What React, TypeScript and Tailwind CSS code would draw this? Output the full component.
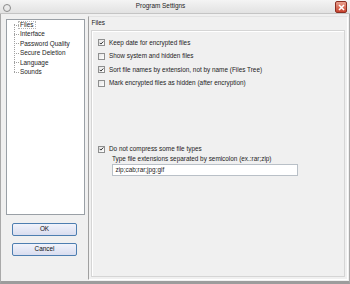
const FONT = { fontFamily: '"Liberation Sans", Arial, sans-serif' };

const TREE_ITEMS = ["Files", "Interface", "Password Quality", "Secure Deletion", "Language", "Sounds"];

const OPTIONS = [
  { label: "Keep date for encrypted files", checked: true },
  { label: "Show system and hidden files", checked: false },
  { label: "Sort file names by extension, not by name (Files Tree)", checked: true },
  { label: "Mark encrypted files as hidden (after encryption)", checked: false },
];

function Check({ checked }: { checked: boolean }) {
  return (
    <span className="flex h-[7px] w-[7px] shrink-0 items-center justify-center border border-[#8e8f8f] bg-gradient-to-br from-[#e4e4e4] to-white">
      {checked && (
        <svg width="6" height="6" viewBox="0 0 6 6">
          <path d="M0.8 2.8 L2.3 4.3 L5.2 1.2" fill="none" stroke="#1f1f1f" strokeWidth="1.1" />
        </svg>
      )}
    </span>
  );
}

function Option({ label, checked }: { label: string; checked: boolean }) {
  return (
    <div className="flex h-[13.5px] items-center gap-[4px]">
      <Check checked={checked} />
      <span className="leading-none">{label}</span>
    </div>
  );
}

function WinButton({ children }: { children: string }) {
  return (
    <button className="flex h-[13px] w-[65px] items-center justify-center rounded-[2px] border border-[#4d7eb0] bg-gradient-to-b from-[#f1f3fb] to-[#d9ddef] leading-none text-[#111]">
      {children}
    </button>
  );
}

export default function App() {
  return (
    <div className="flex h-[284px] w-[350px] flex-col bg-[#f0f0f0] text-[6.4px] text-[#1c1c1c]" style={FONT}>
      {/* title bar */}
      <div className="relative flex h-[14px] shrink-0 items-center justify-center border-b border-[#c4c4c4] bg-gradient-to-b from-[#f4f4f4] to-[#e2e2e2] pr-[29px]">
        <span className="absolute left-[3px] top-[4px] h-[8px] w-[8px] rounded-full border border-[#8a8a8a]" />
        <span className="leading-none">Program Settigns</span>
        <span className="absolute right-[3px] top-[1px] flex h-[12px] w-[12px] items-center justify-center rounded-[2px] border border-[#8c2f22] bg-gradient-to-b from-[#e8a08f] to-[#c8402c]">
          <svg width="7" height="7" viewBox="0 0 7 7">
            <path d="M1 1 L6 6 M6 1 L1 6" stroke="white" strokeWidth="1.6" />
          </svg>
        </span>
      </div>

      <div className="flex flex-1 border-x border-b-[3px] border-x-[#a9a9a9] border-b-[#9c9c9c]">
        {/* left column */}
        <div className="flex w-[87px] shrink-0 flex-col pl-[5px] pt-[5px]">
          <div className="relative h-[196px] w-[79px] border border-[#9aa0a6] bg-white">
            <div className="absolute left-[7px] top-[4px] h-[48px] border-l border-dotted border-[#a0a0a0]" />
            <div className="flex flex-col pt-[0.5px]">
              {TREE_ITEMS.map((t, i) => (
                <div key={t} className="flex h-[9.4px] items-center">
                  <span className="ml-[7px] w-[5px] border-t border-dotted border-[#a0a0a0]" />
                  <span className={`px-[1px] leading-none ${i === 0 ? "outline outline-1 outline-dotted outline-[#b5b5b5]" : ""}`}>{t}</span>
                </div>
              ))}
            </div>
          </div>
          <div className="ml-[6px] mt-[8px] flex flex-col gap-[7px]">
            <WinButton>OK</WinButton>
            <WinButton>Cancel</WinButton>
          </div>
        </div>

        {/* right column */}
        <div className="mb-[1px] mr-[1px] mt-[2px] flex flex-1 flex-col border border-l-[#a0a0a0] border-t-[#e3e3e3] border-r-white border-b-white px-[2px]">
          <div className="flex h-[13px] items-center pl-[0.5px] leading-none">Files</div>
          <div className="mb-[2px] flex flex-1 flex-col border border-[#d5d5d5] pl-[6px] pt-[5px] shadow-[inset_1px_1px_0_white]">
            {OPTIONS.map((o) => (
              <Option key={o.label} label={o.label} checked={o.checked} />
            ))}
            <div className="mt-[52.5px]">
              <Option label="Do not compress some file types" checked />
            </div>
            <div className="ml-[14px] flex h-[7px] items-center leading-none">Type file extensions separated by semicolon (ex.:rar;zip)</div>
            <div className="ml-[14px] mt-[0.5px] flex h-[12.5px] w-[186px] items-center border border-[#b9c0c7] bg-white pl-[2.5px] leading-none">
              zip;cab;rar;jpg;gif
            </div>
          </div>
        </div>
      </div>
    </div>
  );
}
